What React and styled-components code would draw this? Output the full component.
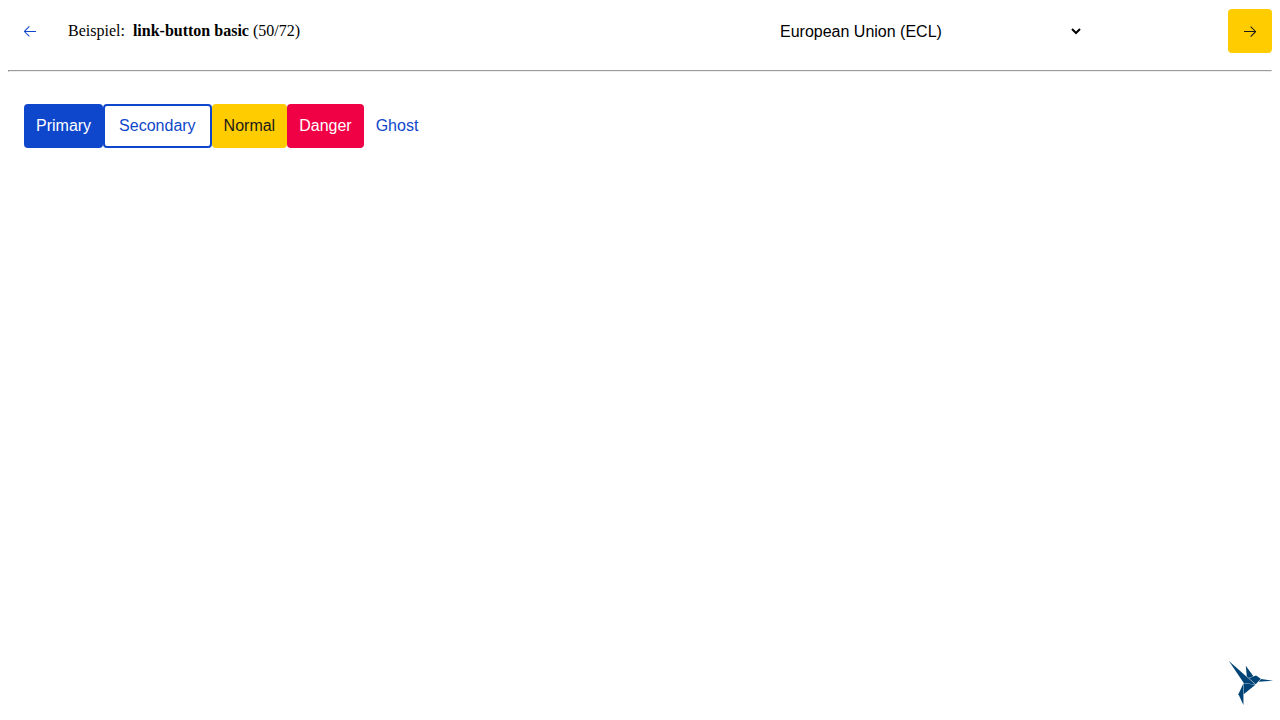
import React from 'react';
import styled, { createGlobalStyle, css } from 'styled-components';

const GlobalStyle = createGlobalStyle`
  body {
    margin: 8px;
    background: #fff;
    color: #000;
    font: 16px/20px "Liberation Serif", "Times New Roman", serif;
  }
  *, *::before, *::after { box-sizing: border-box; }
`;

const Header = styled.header`
  display: grid;
  grid-template-columns: 44px minmax(0, 1fr) 436px 44px;
  column-gap: 16px;
  align-items: center;
  height: 46px;
`;

const variants = {
  primary: css`background: #0e47cb; color: #fff;`,
  secondary: css`background: #fff; color: #0e47cb; border: 2px solid #0e47cb; padding: 0 14px;`,
  normal: css`background: #ffcc00; color: #1a1a1a;`,
  danger: css`background: #f00044; color: #fff;`,
  ghost: css`background: transparent; color: #0e47cb;`,
};

const controlShape = css`
  display: inline-flex;
  align-items: center;
  justify-content: center;
  height: 44px;
  border: 0;
  border-radius: 4px;
  cursor: pointer;
`;

const IconButton = styled.button`
  ${controlShape}
  width: 44px;
  padding: 0;
  ${({ $variant }) => variants[$variant]}
`;

const LinkButton = styled.a`
  ${controlShape}
  padding: 0 12px;
  font: 16px/20px "Liberation Sans", Arial, sans-serif;
  text-decoration: none;
  ${({ $variant }) => variants[$variant]}
`;

const Title = styled.div`
  min-width: 0;
`;

const SampleName = styled.strong`
  margin-left: 4px;
`;

const ThemeSelect = styled.select`
  width: 308px;
  max-width: 100%;
  height: 44px;
  padding: 0;
  border: 0;
  background: transparent;
  color: #000;
  font: 16px/20px "Liberation Sans", Arial, sans-serif;
`;

const Divider = styled.hr`
  margin: 16px 0 32px;
`;

const ButtonRow = styled.main`
  display: flex;
  flex-wrap: wrap;
  padding: 0 16px;
`;

const Logo = styled.svg`
  position: fixed;
  right: 4px;
  bottom: 12px;
  width: 50px;
  height: 50px;
  fill: #004477;
`;

const links = [
  ['primary', 'Primary'],
  ['secondary', 'Secondary'],
  ['normal', 'Normal'],
  ['danger', 'Danger'],
  ['ghost', 'Ghost'],
];

const arrows = {
  left: 'M7 3.093l-5 5V8.8l5 5 .707-.707-4.146-4.147H14v-1H3.56L7.708 3.8 7 3.093z',
  right: 'M9 13.887l5-5V8.18l-5-5-.707.707 4.146 4.147H2v1h10.44L8.293 13.18 9 13.887z',
};

const Arrow = ({ direction }) => (
  <svg width="16" height="16" viewBox="0 0 16 16" fill="currentColor" aria-hidden="true">
    <path d={arrows[direction]} />
  </svg>
);

export default function App() {
  return (
    <>
      <GlobalStyle />
      <Header>
        <IconButton type="button" $variant="ghost" aria-label="Zurück">
          <Arrow direction="left" />
        </IconButton>
        <Title>
          Beispiel: <SampleName>link-button basic</SampleName> (50/72)
        </Title>
        <ThemeSelect aria-label="Theme" defaultValue="ecl-eu">
          <option value="ecl-eu">European Union (ECL)</option>
        </ThemeSelect>
        <IconButton type="button" $variant="normal" aria-label="Weiter">
          <Arrow direction="right" />
        </IconButton>
      </Header>
      <Divider />
      <ButtonRow>
        {links.map(([variant, label]) => (
          <LinkButton key={variant} href="#" $variant={variant}>{label}</LinkButton>
        ))}
      </ButtonRow>
      <Logo viewBox="0 0 600 600" role="img" aria-label="KoliBri">
        <path d="M353 322L213 304V434L353 322Z" />
        <path d="M209 564V304L149 434L209 564Z" />
        <path d="M357 316L417 250L361 210L275 244L357 316Z" />
        <path d="M329 218L237 92L250 222L272 241L329 218Z" />
        <path d="M353 318L35 36L213 300L353 318Z" />
        <path d="M391 286L565 272L421 252L391 286Z" />
      </Logo>
    </>
  );
}
